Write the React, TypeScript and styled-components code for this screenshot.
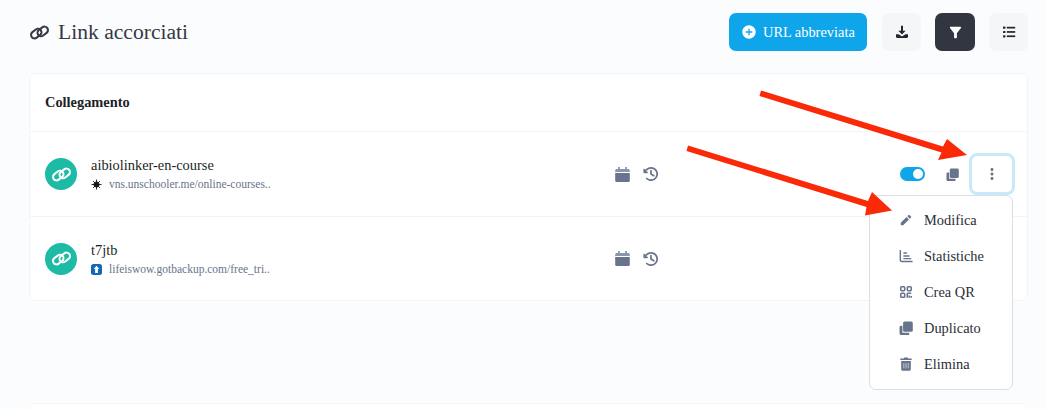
import React from "react";
import styled, { createGlobalStyle } from "styled-components";
import { MdAddCircle, MdFilterAlt, MdMoreVert } from "react-icons/md";
import { RiPencilFill } from "react-icons/ri";
import { PiClockCounterClockwiseBold } from "react-icons/pi";

const Global = createGlobalStyle`
  html, body { margin: 0; padding: 0; background: #fbfcfe; height: 409px; overflow: hidden; }
  * { box-sizing: border-box; }
  body { font-family: "Liberation Serif", serif; color: #1f2430; }
`;
const Page = styled.div`
  position: relative; width: 1046px; height: 409px; overflow: hidden;
  padding: 13px 18px 0 29px;
`;
const TopBar = styled.header`
  display: flex; align-items: center; height: 38px; margin-bottom: 22px;
`;
const Title = styled.h1`
  flex: 1; display: flex; align-items: center; gap: 8px; margin: 0;
  font-size: 21.6px; font-weight: 400; color: #333844;
`;
const Actions = styled.div`display: flex; align-items: center; gap: 14px;`;
const PrimaryButton = styled.button`
  width: 138px; height: 38px; border: 0; border-radius: 7px; background: #0ea5ea; color: #fff;
  display: flex; align-items: center; gap: 6px; padding: 0 0 0 12px; margin-right: 1px;
  font: 400 14.4px "Liberation Serif", serif; white-space: nowrap;
  svg { font-size: 16px; flex: none; }
`;
const IconButton = styled.button<{ $dark?: boolean }>`
  width: ${p => (p.$dark ? "40px" : "39px")}; height: 38px; border: 0; border-radius: 7px; padding: 0;
  display: flex; align-items: center; justify-content: center; font-size: 17px;
  background: ${p => (p.$dark ? "#313640" : "#f5f6f8")};
  color: ${p => (p.$dark ? "#fff" : "#23262e")};
`;
const Card = styled.section`
  background: #fff; border: 1px solid #f3f4f7; border-radius: 7px; width: 999px;
`;
const CardHead = styled.div`
  height: 58px; padding: 0 15px; display: flex; align-items: center;
  font-size: 14.4px; font-weight: 700; color: #1c1f26; border-bottom: 1px solid #f3f4f7;
`;
const Row = styled.div`
  position: relative; display: flex; align-items: center; height: 84px; padding: 0 13px 0 15px;
  & + & { border-top: 1px solid #f3f4f7; }
`;
const Avatar = styled.div`
  width: 32px; height: 32px; border-radius: 50%; background: #1dbba6; color: #fff;
  display: flex; align-items: center; justify-content: center; margin-right: 14px; flex: none;
`;
const Info = styled.div`width: 524px; flex: none; display: flex; flex-direction: column; gap: 5px;`;
const Name = styled.div`font-size: 14.4px; line-height: 16px; color: #1c1f26;`;
const UrlLine = styled.div`display: flex; align-items: center; gap: 7px; font-size: 11.5px; line-height: 13px; color: #68738c;`;
const Favicon = styled.span`display: flex; width: 11px; height: 11px; flex: none;`;
const Meta = styled.div`display: flex; align-items: center; gap: 12px; color: #68738c; font-size: 18px; svg { display:block; }`;
const RowActions = styled.div`margin-left: auto; display: flex; align-items: center; color: #68738c;`;
const Toggle = styled.span`
  position: relative; width: 25px; height: 14px; border-radius: 7px; background: #0ea5ea; margin-right: 21px;
  &::after { content: ""; position: absolute; right: 2px; top: 2px; width: 10px; height: 10px; border-radius: 50%; background: #fff; }
`;
const CopyIcon = styled.span`display: flex; margin-right: 10px;`;
const Kebab = styled.span`
  width: 46px; height: 42px; border: 3px solid #c7eafa; border-radius: 8px; margin-right: -1px;
  display: flex; align-items: center; justify-content: center; font-size: 18px; background: #fff;
`;
const Menu = styled.ul`
  position: absolute; left: 869px; top: 195px; width: 144px; height: 195px; margin: 0; padding: 6px 0 0;
  list-style: none; background: #fff; border: 1px solid #dcdee3; border-radius: 7px;
`;
const MenuItem = styled.li`
  height: 36px; display: flex; align-items: center; padding-left: 29px; gap: 11px;
  font-size: 14.4px; color: #2a2e38;
  svg { width: 14px; height: 14px; color: #68738c; flex: none; }
`;
const NextCard = styled(Card)`margin-top: 102px; height: 40px;`;
const Arrows = styled.svg`position: absolute; left: 0; top: 0; pointer-events: none;`;

type IconProps = { size?: number };

const ChainIcon: React.FC<IconProps> = ({ size = 20 }) => (
  <svg viewBox="0 0 24 24" width={size} height={size} fill="none" stroke="currentColor" strokeWidth="2.300">
    <rect x="1.800" y="9.200" width="13" height="8" rx="4" transform="rotate(-38 8.300 13.200)" />
    <rect x="9.200" y="6.800" width="13" height="8" rx="4" transform="rotate(-38 15.700 10.800)" />
  </svg>
);
const DownloadIcon = () => (
  <svg viewBox="0 0 14 14" width="14" height="14" fill="currentColor">
    <path d="M6 .8h2v5h2.600L7 9.600 3.400 5.800H6z" />
    <path d="M1 9.200h2.600L7 11.400l3.400-2.200H13v2.600c0 .7-.5 1.200-1.200 1.200H2.200C1.500 13 1 12.500 1 11.800z" />
  </svg>
);
const ListIcon = () => (
  <svg viewBox="0 0 14 14" width="14" height="14" fill="currentColor">
    <rect x="1" y="1.600" width="2.400" height="2.200" rx=".6" />
    <rect x="1" y="5.900" width="2.400" height="2.200" rx=".6" />
    <rect x="1" y="10.200" width="2.400" height="2.200" rx=".6" />
    <rect x="4.800" y="1.800" width="8.400" height="1.700" />
    <rect x="4.800" y="6.100" width="8.400" height="1.700" />
    <rect x="4.800" y="10.400" width="8.400" height="1.700" />
  </svg>
);
const CalendarIcon = () => (
  <svg viewBox="0 0 15 15" width="15" height="15">
    <path d="M3 0h1.800v2h5.400V0H12v2h1.200c.9 0 1.600.7 1.600 1.600V5H.2V3.600C.2 2.700.9 2 1.800 2H3z" fill="#8c96aa" />
    <path d="M.2 6h14.600v7.400c0 .9-.7 1.600-1.600 1.600H1.800c-.9 0-1.600-.7-1.600-1.600z" fill="#68738c" />
  </svg>
);
const DupIcon: React.FC<IconProps> = ({ size = 13 }) => (
  <svg viewBox="0 0 13 13" width={size} height={size}>
    <path d="M1.800 4.500h1.400v6.300h6.300V12c0 .5-.4 1-1 1H1.800c-.8 0-1.300-.6-1.300-1.300V5.700c0-.6.500-1.200 1.300-1.200z" fill="currentColor" />
    <rect x="3.800" y="0.500" width="9" height="9.500" rx="1.400" fill="currentColor" />
  </svg>
);
const StatsIcon = () => (
  <svg viewBox="0 0 16 16" fill="none" stroke="currentColor" strokeWidth="1.600">
    <path d="M1.500 1v11.500c0 1 .6 1.700 1.700 1.700H15.500" />
    <path d="M5 4.500h4M5 8h7M5 11h9" />
  </svg>
);
const QrIcon = () => (
  <svg viewBox="0 0 16 16" fill="none" stroke="currentColor" strokeWidth="1.800">
    <rect x="2" y="2" width="4.500" height="4.500" rx="1" />
    <rect x="9.500" y="2" width="4.500" height="4.500" rx="1" />
    <rect x="2" y="9.500" width="4.500" height="4.500" rx="1" />
    <path d="M9.500 14.500V10.200c0-.4.300-.7.700-.7h3.800M14 12.500v2M11.800 12v2.500" />
  </svg>
);
const TrashIcon = () => (
  <svg viewBox="0 0 16 16">
    <path d="M6 .6h4l.6 1.200H14.500v1.700h-13V1.800h3.900z" fill="currentColor" />
    <path d="M2.500 4.500h11v9.600c0 .9-.7 1.500-1.500 1.500H4c-.8 0-1.500-.6-1.500-1.500z" fill="currentColor" />
    <path d="M5.500 7v6M8 7v6M10.500 7v6" stroke="#fff" strokeWidth=".9" opacity=".75" />
  </svg>
);
const DupMenu = () => <DupIcon size={14} />;

const MENU: [React.ComponentType, string][] = [
  [RiPencilFill, "Modifica"],
  [StatsIcon, "Statistiche"],
  [QrIcon, "Crea QR"],
  [DupMenu, "Duplicato"],
  [TrashIcon, "Elimina"],
];

const Spark = () => (
  <svg viewBox="0 0 11 11" width="11" height="11" stroke="#15171c" strokeWidth=".9">
    <circle cx="5.500" cy="5.500" r="2.600" fill="#15171c" />
    <path d="M5.500.5v10M.5 5.500h10M2 2l7 7M9 2l-7 7" />
  </svg>
);
const Upbox = () => (
  <svg viewBox="0 0 11 11" width="11" height="11">
    <rect width="11" height="11" rx="2.500" fill="#1267b8" />
    <path d="M5.500 1.800L8.400 5H6.900v4H4.100V5H2.600z" fill="#fff" />
  </svg>
);

const LinkRow: React.FC<{ name: string; url: string; icon: React.ReactNode; children?: React.ReactNode }> = ({ name, url, icon, children }) => (
  <Row>
    <Avatar><ChainIcon size={21} /></Avatar>
    <Info>
      <Name>{name}</Name>
      <UrlLine><Favicon>{icon}</Favicon>{url}</UrlLine>
    </Info>
    <Meta><CalendarIcon /><PiClockCounterClockwiseBold /></Meta>
    {children}
  </Row>
);

export default function App() {
  return (
    <Page>
      <Global />
      <TopBar>
        <Title><ChainIcon size={21} />Link accorciati</Title>
        <Actions>
          <PrimaryButton><MdAddCircle />URL abbreviata</PrimaryButton>
          <IconButton><DownloadIcon /></IconButton>
          <IconButton $dark><MdFilterAlt /></IconButton>
          <IconButton><ListIcon /></IconButton>
        </Actions>
      </TopBar>
      <Card>
        <CardHead>Collegamento</CardHead>
        <LinkRow name="aibiolinker-en-course" url="vns.unschooler.me/online-courses.." icon={<Spark />}>
          <RowActions>
            <Toggle />
            <CopyIcon><DupIcon /></CopyIcon>
            <Kebab><MdMoreVert /></Kebab>
          </RowActions>
        </LinkRow>
        <LinkRow name="t7jtb" url="lifeiswow.gotbackup.com/free_tri.." icon={<Upbox />} />
      </Card>
      <NextCard />
      <Menu>
        {MENU.map(([I, label]) => (
          <MenuItem key={label}><I />{label}</MenuItem>
        ))}
      </Menu>
      <Arrows width="1046" height="409" viewBox="0 0 1046 409">
        <path d="M761 90.500L943 146.500 947 139 967 155 938 160 941.500 152.500 759.500 96z" fill="#fa2a08" />
        <path d="M688 145.500L868 201 872 192 892 210.500 865 215.500 866.500 207 686.500 151z" fill="#fa2a08" />
      </Arrows>
    </Page>
  );
}
